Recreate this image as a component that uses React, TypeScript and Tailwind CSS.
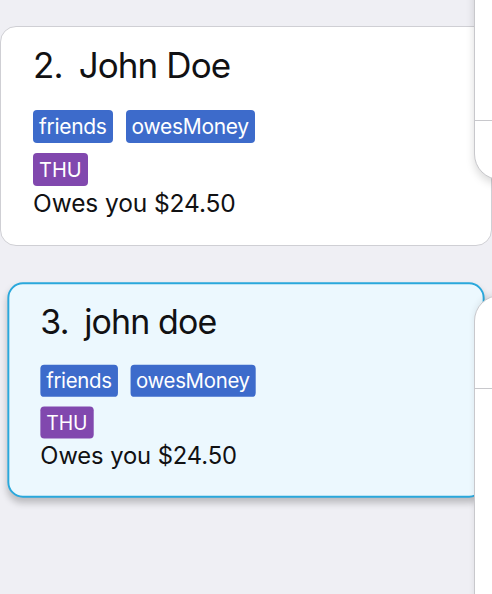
import React from 'react';

type Person = {
  index: number;
  name: string;
  tags: string[];
  day: string;
  balance: string;
};

const people: Person[] = [
  { index: 2, name: 'John Doe', tags: ['friends', 'owesMoney'], day: 'THU', balance: 'Owes you $24.50' },
  { index: 3, name: 'john doe', tags: ['friends', 'owesMoney'], day: 'THU', balance: 'Owes you $24.50' },
];

function PersonCard({ person, dragging }: { person: Person; dragging?: boolean }) {
  const shell = dragging
    ? 'scale-[0.97] border-2 border-[#2aa8dc] bg-[#ecf8fe] shadow-[0_5px_8px_rgba(0,0,0,0.22)]'
    : 'border border-[#cfcfd4] bg-white';

  return (
    <div className={`w-full rounded-2xl px-8 pt-[18px] pb-[27px] ${shell}`}>
      <div className="flex items-baseline gap-[16px] text-[35px] leading-[41px] text-[#111113] tracking-[-0.9px]">
        <span>{person.index}.</span>
        <span>{person.name}</span>
      </div>
      <div className="mt-6 flex gap-[13px]">
        {person.tags.map((tag) => (
          <span
            key={tag}
            className="flex h-[33px] items-center rounded-[4px] bg-[#3d6bcb] px-[6px] text-[21px] text-white tracking-[-0.3px]"
          >
            {tag}
          </span>
        ))}
      </div>
      <div className="mt-[10px] flex">
        <span className="flex h-[33px] items-center rounded-[4px] bg-[#8148ae] px-[6px] text-[20px] text-white">
          {person.day}
        </span>
      </div>
      <p className="mt-[3px] text-[24.5px] leading-[29px] text-[#111113] tracking-[-0.1px]">{person.balance}</p>
    </div>
  );
}

export default function App() {
  return (
    <div
      className="relative h-[594px] w-[492px] overflow-hidden bg-[#efeff4]"
      style={{ fontFamily: 'Inter, "Noto Sans", sans-serif' }}
    >
      <div className="flex flex-col gap-[33px] pt-[26px]">
        {people.map((p, i) => (
          <PersonCard key={p.index} person={p} dragging={i === 1} />
        ))}
      </div>

      {/* next column peeking in from the right */}
      <div className="absolute left-[474px] top-[-30px] h-[210px] w-[80px] rounded-bl-[26px] border border-[#c8c8cc] bg-white shadow-[0_4px_8px_rgba(0,0,0,0.15)]">
        <div className="h-[150px] border-b border-[#c8c8cc]" />
      </div>
      <div className="absolute left-[474px] top-[295px] h-[340px] w-[80px] rounded-tl-[26px] border border-[#c8c8cc] bg-white shadow-[0_-2px_6px_rgba(0,0,0,0.08)]">
        <div className="h-[93px] border-b border-[#c8c8cc]" />
      </div>
    </div>
  );
}
